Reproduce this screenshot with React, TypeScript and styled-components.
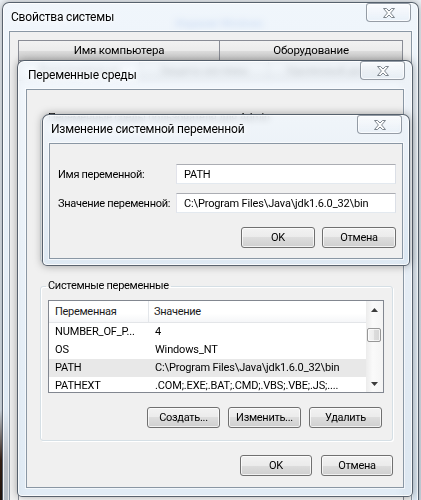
import styled, { createGlobalStyle } from "styled-components";

const GlobalStyle = createGlobalStyle`
  html, body {
    margin: 0;
    padding: 0;
  }
  body {
    font-family: Roboto, "Noto Sans", sans-serif;
    font-size: 11px;
    letter-spacing: -0.3px;
    color: #000;
  }
  * {
    box-sizing: border-box;
  }
`;

type WinProps = {
  $x: number;
  $y: number;
  $w: number;
  $h: number;
  $frame: number;
  $z: number;
};

const systemVars = [
  { name: "NUMBER_OF_P...", value: "4" },
  { name: "OS", value: "Windows_NT" },
  { name: "PATH", value: "C:\\Program Files\\Java\\jdk1.6.0_32\\bin", selected: true },
  { name: "PATHEXT", value: ".COM;.EXE;.BAT;.CMD;.VBS;.VBE;.JS;...." },
];

const CloseGlyph = () => (
  <svg width="12" height="10" viewBox="0 0 12 10">
    <polygon
      points="0.5,0.5 3.5,0.5 6,3 8.5,0.5 11.5,0.5 7.6,5 11.5,9.5 8.5,9.5 6,7 3.5,9.5 0.5,9.5 4.4,5"
      fill="#fdfdfd"
      stroke="#7d858d"
      strokeWidth="1"
      strokeLinejoin="round"
    />
  </svg>
);

const Arrow = ({ down }: { down?: boolean }) => (
  <svg width="7" height="4" viewBox="0 0 7 4">
    <polygon points={down ? "0,0 7,0 3.5,4" : "0,4 7,4 3.5,0"} fill="#3c3c3c" />
  </svg>
);

const ListBox = ({ rows }: { rows: { name: string; value: string; selected?: boolean }[] }) => (
  <ListView>
    <ListBody>
      <HeaderRow>
        <HeaderCell>Переменная</HeaderCell>
        <HeaderCell>Значение</HeaderCell>
      </HeaderRow>
      {rows.map((r) => (
        <Row key={r.name} $selected={r.selected}>
          <Cell>{r.name}</Cell>
          <Cell>{r.value}</Cell>
        </Row>
      ))}
    </ListBody>
    <ScrollBar>
      <ScrollArrow>
        <Arrow />
      </ScrollArrow>
      <ScrollThumb />
      <ScrollArrow>
        <Arrow down />
      </ScrollArrow>
    </ScrollBar>
  </ListView>
);

export default function App() {
  return (
    <Desktop>
      <GlobalStyle />
      <DesktopText>Издание Windows</DesktopText>

      <Window $x={2} $y={2} $w={417} $h={530} $frame={7} $z={1}>
        <TitleBar>
          <Title>Свойства системы</Title>
          <CloseButton $frame={7}>
            <CloseGlyph />
          </CloseButton>
        </TitleBar>
        <TabsClient>
          <TabRow>
            <Tab $w={202}>Имя компьютера</Tab>
            <Tab $w={184}>Оборудование</Tab>
          </TabRow>
          <TabRow>
            <Tab $w={122} $active>
              Дополнительно
            </Tab>
            <Tab $w={130}>Защита системы</Tab>
            <Tab $w={134}>Удаленный доступ</Tab>
          </TabRow>
          <TabPanel />
        </TabsClient>
      </Window>

      <Window $x={17} $y={60} $w={396} $h={437} $frame={9} $z={2}>
        <TitleBar>
          <Title>Переменные среды</Title>
          <CloseButton $frame={9}>
            <CloseGlyph />
          </CloseButton>
        </TitleBar>
        <EnvClient>
          {/* user variables group: only its caption shows past the edit dialog */}
          <Group $h={152}>
            <GroupLabel>Переменные среды пользователя для Admin</GroupLabel>
          </Group>
          <Group $h={163}>
            <GroupLabel>Системные переменные</GroupLabel>
            <ListBox rows={systemVars} />
            <ButtonRow>
              <Button $w={73}>Создать...</Button>
              <Button $w={73}>Изменить...</Button>
              <Button $w={73}>Удалить</Button>
            </ButtonRow>
          </Group>
          <DialogButtons>
            <Button $w={72}>OK</Button>
            <Button $w={72}>Отмена</Button>
          </DialogButtons>
        </EnvClient>
      </Window>

      <Window $x={42} $y={114} $w={368} $h={152} $frame={7} $z={3}>
        <TitleBar>
          <Title>Изменение системной переменной</Title>
          <CloseButton $frame={7}>
            <CloseGlyph />
          </CloseButton>
        </TitleBar>
        <EditClient>
          <FormGrid>
            <FieldLabel>Имя переменной:</FieldLabel>
            <TextInput readOnly value="PATH" />
            <FieldLabel>Значение переменной:</FieldLabel>
            <TextInput readOnly value="C:\Program Files\Java\jdk1.6.0_32\bin" />
          </FormGrid>
          <EditButtons>
            <Button $w={74}>OK</Button>
            <Button $w={74}>Отмена</Button>
          </EditButtons>
        </EditClient>
      </Window>
    </Desktop>
  );
}

const Desktop = styled.div`
  position: relative;
  width: 421px;
  height: 500px;
  overflow: hidden;
  background:
    radial-gradient(circle at 0 100%, #24170f 0, #3a2418 40px, transparent 90px),
    linear-gradient(180deg, #eef3f8 0%, #dbe6f0 100%);
`;

const DesktopText = styled.span`
  position: absolute;
  left: 175px;
  top: 17px;
  color: #2f6bd0;
`;

const Window = styled.div<WinProps>`
  position: absolute;
  left: ${(p) => p.$x}px;
  top: ${(p) => p.$y}px;
  width: ${(p) => p.$w}px;
  height: ${(p) => p.$h}px;
  z-index: ${(p) => p.$z};
  display: flex;
  flex-direction: column;
  padding: 0 ${(p) => p.$frame - 1}px ${(p) => p.$frame - 1}px;
  border: 1px solid rgba(48, 58, 70, 0.78);
  border-radius: 7px 7px 5px 5px;
  background: linear-gradient(180deg, rgba(240, 246, 252, 0.8), rgba(218, 231, 243, 0.8));
  backdrop-filter: blur(3px);
  box-shadow:
    inset 0 0 0 1px rgba(255, 255, 255, 0.8),
    0 0 9px rgba(0, 0, 0, 0.35);
`;

const TitleBar = styled.div`
  flex: none;
  height: 28px;
  display: flex;
  align-items: flex-start;
  justify-content: space-between;
`;

const Title = styled.span`
  margin-left: 2px;
  font-size: 12px;
  letter-spacing: -0.2px;
  line-height: 28px;
  white-space: nowrap;
  text-shadow: 0 0 8px #fff, 0 0 4px #fff;
`;

const CloseButton = styled.div<{ $frame: number }>`
  width: 45px;
  height: 19px;
  margin-right: ${(p) => 8 - p.$frame}px;
  display: grid;
  place-items: center;
  border: 1px solid rgba(70, 80, 94, 0.55);
  border-radius: 3px 3px 4px 4px;
  background: linear-gradient(180deg, rgba(255, 255, 255, 0.6), rgba(226, 235, 244, 0.45));
  box-shadow: inset 0 0 0 1px rgba(255, 255, 255, 0.65);
`;

const Client = styled.div`
  flex: 1;
  min-height: 0;
  display: flex;
  flex-direction: column;
  background: #f0f0f0;
  border: 1px solid #8a97a4;
  box-shadow: 0 0 0 1px rgba(255, 255, 255, 0.6);
`;

const TabsClient = styled(Client)`
  padding: 8px 7px 0 8px;
`;

const TabRow = styled.div`
  display: flex;
  height: 20px;
  flex: none;
`;

const Tab = styled.div<{ $w: number; $active?: boolean }>`
  width: ${(p) => p.$w}px;
  border: 1px solid #898c95;
  border-bottom: none;
  margin-left: -1px;
  text-align: center;
  font-size: 11.5px;
  letter-spacing: -0.2px;
  line-height: 19px;
  white-space: nowrap;
  background: ${(p) =>
    p.$active
      ? "#fcfcfc"
      : "linear-gradient(180deg, #f2f2f2 0%, #ebebeb 50%, #dddddd 50%, #cfcfcf 100%)"};
  &:first-child {
    margin-left: 0;
  }
`;

const TabPanel = styled.div`
  flex: 1;
  border: 1px solid #898c95;
  background: #fcfcfc;
`;

const EnvClient = styled(Client)`
  padding: 20px 10px 0 13px;
`;

const Group = styled.fieldset<{ $h: number }>`
  margin: 0 0 16px;
  height: ${(p) => p.$h}px;
  flex: none;
  padding: 6px 8px 0 7px;
  border: 1px solid #d5dfe5;
  border-radius: 3px;
  box-shadow: 1px 1px 0 #fff, inset 1px 1px 0 #fff;
  display: flex;
  flex-direction: column;
  gap: 14px;
`;

const GroupLabel = styled.legend`
  margin-left: -2px;
  padding: 0 2px;
  line-height: 16px;
`;

const ListView = styled.div`
  height: 93px;
  flex: none;
  display: flex;
  border: 1px solid #828790;
  background: #fff;
`;

const ListBody = styled.div`
  flex: 1;
  min-width: 0;
  overflow: hidden;
`;

const HeaderRow = styled.div`
  display: grid;
  grid-template-columns: 99px 1fr;
  height: 22px;
  border-bottom: 1px solid #e3e5e8;
  background: linear-gradient(180deg, #ffffff 0%, #ffffff 60%, #f5f6f8 100%);
`;

const HeaderCell = styled.div`
  padding-left: 6px;
  line-height: 21px;
  color: #1a1a1a;
  & + & {
    border-left: 1px solid #e3e6ea;
    padding-left: 5px;
  }
`;

const Row = styled.div<{ $selected?: boolean }>`
  display: grid;
  grid-template-columns: 100px 1fr;
  height: 18px;
  line-height: 18px;
  background: ${(p) => (p.$selected ? "#e8e8e8" : "transparent")};
`;

const Cell = styled.div`
  padding-left: 6px;
  white-space: nowrap;
  overflow: hidden;
  letter-spacing: -0.15px;
`;

const ScrollBar = styled.div`
  width: 17px;
  flex: none;
  display: flex;
  flex-direction: column;
  background: linear-gradient(90deg, #ececec, #fafafa 40%, #f4f4f4);
`;

const ScrollArrow = styled.div`
  height: 17px;
  display: grid;
  place-items: center;
  &:last-child {
    margin-top: auto;
  }
`;

const ScrollThumb = styled.div`
  margin: 10px 2px 0 1px;
  height: 14px;
  border: 1px solid #979797;
  border-radius: 2px;
  background: linear-gradient(90deg, #f4f4f4 0%, #ececec 50%, #dcdcdc 50%, #d6d6d6 100%);
  box-shadow: inset 0 0 0 1px rgba(255, 255, 255, 0.7);
`;

const ButtonRow = styled.div`
  display: flex;
  justify-content: flex-end;
  gap: 8px;
  padding-right: 2px;
`;

const DialogButtons = styled.div`
  display: flex;
  justify-content: flex-end;
  gap: 9px;
  margin-top: -2px;
`;

const Button = styled.div<{ $w: number }>`
  width: ${(p) => p.$w}px;
  height: 21px;
  display: grid;
  place-items: center;
  border: 1px solid #707070;
  border-radius: 3px;
  background: linear-gradient(180deg, #f2f2f2 0%, #ebebeb 50%, #dddddd 50%, #cfcfcf 100%);
  box-shadow: inset 0 0 0 1px rgba(255, 255, 255, 0.7);
  white-space: nowrap;
`;

const EditClient = styled(Client)`
  padding: 20px 6px 0 8px;
`;

const FormGrid = styled.div`
  display: grid;
  grid-template-columns: 118px 1fr;
  row-gap: 9px;
  align-items: center;
`;

const FieldLabel = styled.span`
  white-space: nowrap;
`;

const TextInput = styled.input`
  height: 20px;
  width: 100%;
  padding: 0 7px;
  border: 1px solid;
  border-color: #abadb3 #dbdfe6 #e3e9ef #e2e3ea;
  background: #fff;
  font: inherit;
  letter-spacing: -0.15px;
  color: #000;
  outline: none;
`;

const EditButtons = styled.div`
  display: flex;
  justify-content: flex-end;
  gap: 7px;
  margin-top: 14px;
`;
